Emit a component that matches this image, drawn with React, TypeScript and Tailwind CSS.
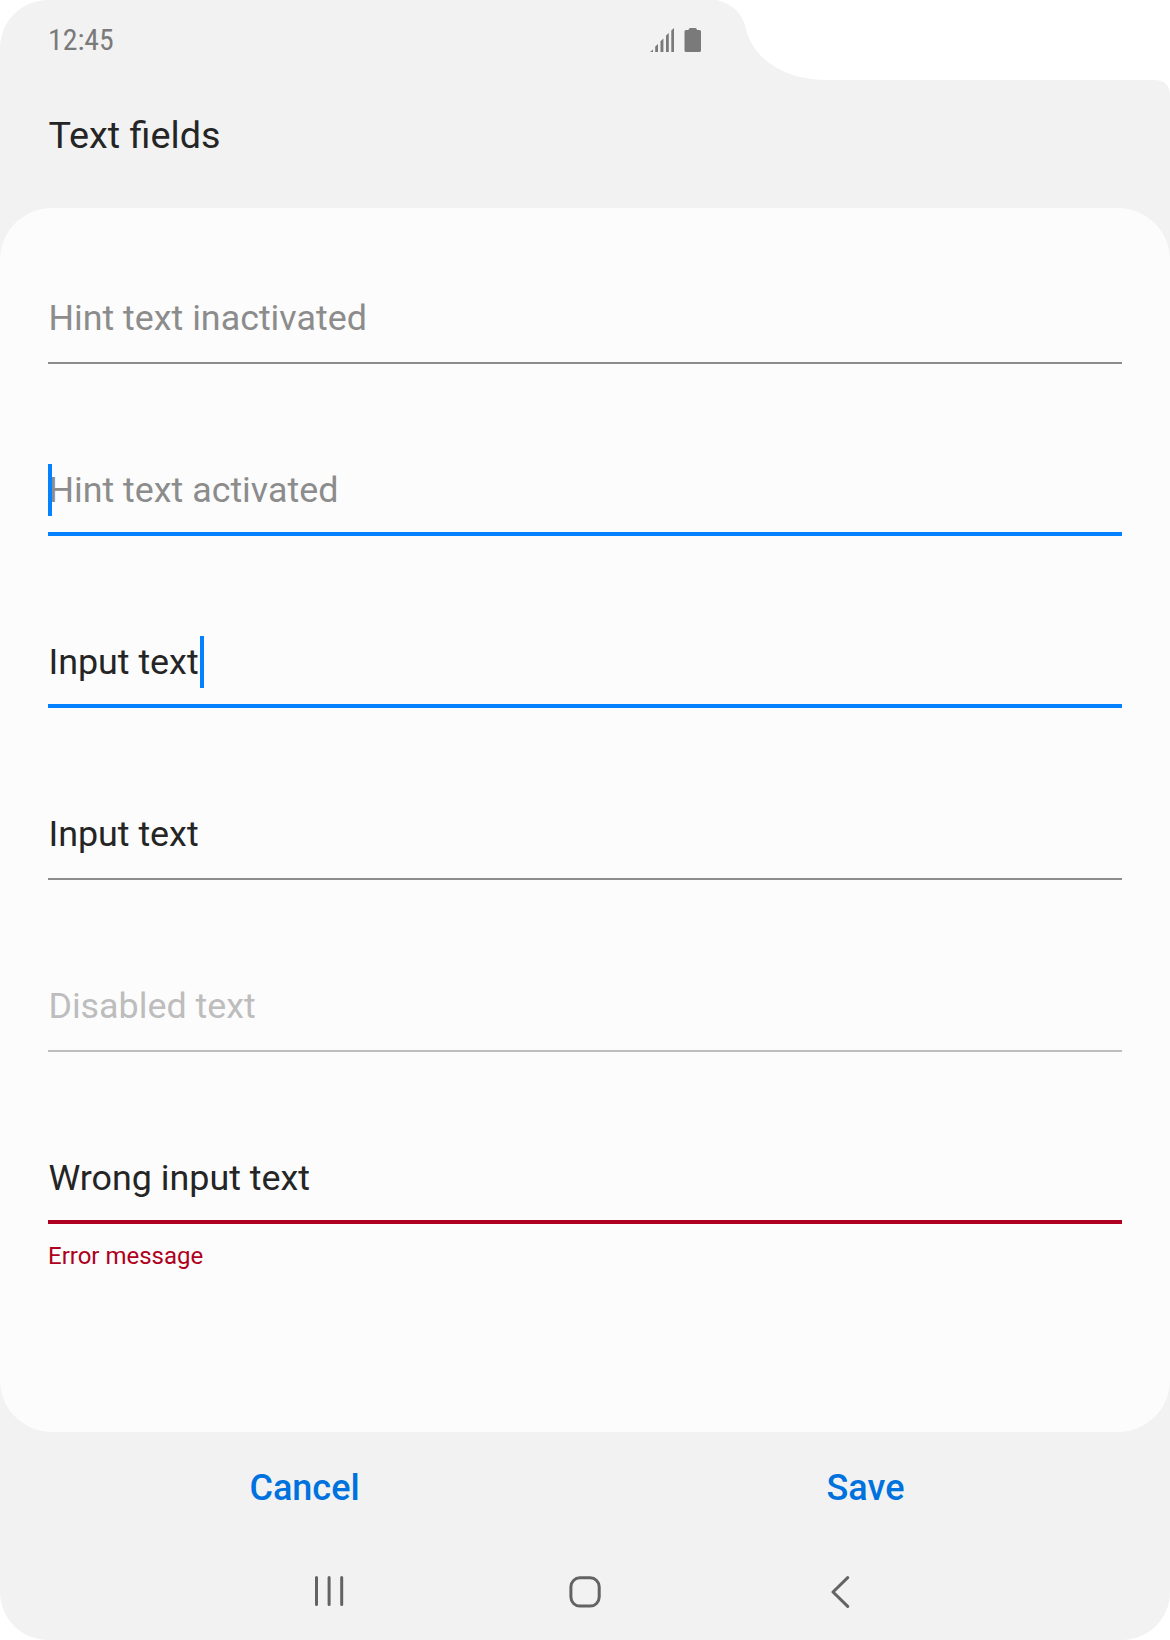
import React from "react";

type Field = {
  text: string;
  color: string;
  line: string;
  caret?: "start" | "end";
};

const fields: Field[] = [
  { text: "Hint text inactivated", color: "text-[#8c8c8c]", line: "h-[2px] bg-[#8c8c8c]" },
  { text: "Hint text activated", color: "text-[#8c8c8c]", line: "h-[4px] bg-[#0381fe]", caret: "start" },
  { text: "Input text", color: "text-[#252525]", line: "h-[4px] bg-[#0381fe]", caret: "end" },
  { text: "Input text", color: "text-[#252525]", line: "h-[2px] bg-[#8c8c8c]" },
  { text: "Disabled text", color: "text-[#bdbdbd]", line: "h-[2px] bg-[#bdbdbd]" },
  { text: "Wrong input text", color: "text-[#252525]", line: "h-[4px] bg-[#b00020]" },
];

function TextField({ text, color, line, caret }: Field) {
  return (
    <div className="flex h-[172px] flex-col justify-end">
      <div className={`relative mb-auto mt-[100px] h-[52px] whitespace-nowrap pl-[0.4px] text-[35.85px] leading-[52px] ${color}`}>
        {text}
        {caret === "start" && <span className="absolute left-0 top-0 h-[52px] w-[4px] bg-[#0381fe]" />}
        {caret === "end" && <span className="absolute left-[152px] top-0 h-[52px] w-[4px] bg-[#0381fe]" />}
      </div>
      <div className={`w-full ${line}`} />
    </div>
  );
}

function StatusIcons() {
  return (
    <svg width="52" height="24" viewBox="0 0 52 24" fill="#7a7a7a">
      <path d="M0 24L3 21.500V24zM5.200 24V18.600L8 16V24zM10.500 24V13.200L13.400 10.500V24zM16 24V7.600L18.800 5V24zM21.300 24V2.400L24 0V24z" />
      <path d="M40.300 0h5q1.500 0 1.700 2h2.500q1.500 0 1.500 1.500v19q0 1.500-1.500 1.500h-13.500q-1.500 0-1.500-1.500v-19q0-1.500 1.500-1.500h2.500q.2-2 1.800-2z" />
    </svg>
  );
}

export default function App() {
  return (
    <div className="h-[1640px] w-[1170px] bg-white font-['Roboto',sans-serif]">
      <div className="relative flex h-full w-full flex-col overflow-hidden rounded-[48px] rounded-tr-none bg-[#f2f2f2]">
        <svg className="absolute right-0 top-0" width="470" height="96" viewBox="700 0 470 96" fill="#fff">
          <path d="M717 0C732 4 742 13 745.500 27C752 59 785 80 826 80H1154Q1170 80 1170 96V0z" />
        </svg>
        <header className="flex h-[80px] w-[750px] shrink-0 items-center justify-between px-[48px]">
          <span className="-mt-[1px] text-[29.8px] leading-[41px] text-[#7a7a7a] [font-stretch:75%]">12:45</span>
          <StatusIcons />
        </header>
        <h1 className="h-[128px] shrink-0 pl-[48.4px] pt-[30px] text-[37.75px] leading-[50px] text-[#252525]">Text fields</h1>
        <main className="h-[1224px] shrink-0 rounded-[52px] bg-[#fcfcfc] px-[48px]">
          <div className="-mt-[16px] flex flex-col">
            {fields.map((field, i) => (
              <TextField key={i} {...field} />
            ))}
          </div>
          <p className="mt-[16px] text-[24px] leading-[32px] text-[#b00020]">Error message</p>
        </main>
        <div className="flex h-[112px] shrink-0 px-[24px] text-[36px] font-medium text-[#0072de]">
          <button className="flex-1">Cancel</button>
          <button className="flex-1">Save</button>
        </div>
        <nav className="flex h-[96px] shrink-0 items-center justify-center gap-[224px]">
          <svg width="32" height="32" viewBox="0 0 32 32" fill="none" stroke="#636363" strokeWidth="3" strokeLinecap="round">
            <path d="M3.500 1.600V28.500M16.100 1.600V28.500M28.700 1.600V28.500" />
          </svg>
          <svg width="32" height="32" viewBox="0 0 32 32" fill="none" stroke="#636363" strokeWidth="3">
            <rect x="1.900" y="1.800" width="28.300" height="28.300" rx="9" />
          </svg>
          <svg width="32" height="32" viewBox="0 0 32 32" fill="none" stroke="#636363" strokeWidth="3" strokeLinecap="round" strokeLinejoin="round">
            <path d="M22.700 1.600L8 16L22.700 30.400" />
          </svg>
        </nav>
      </div>
    </div>
  );
}
